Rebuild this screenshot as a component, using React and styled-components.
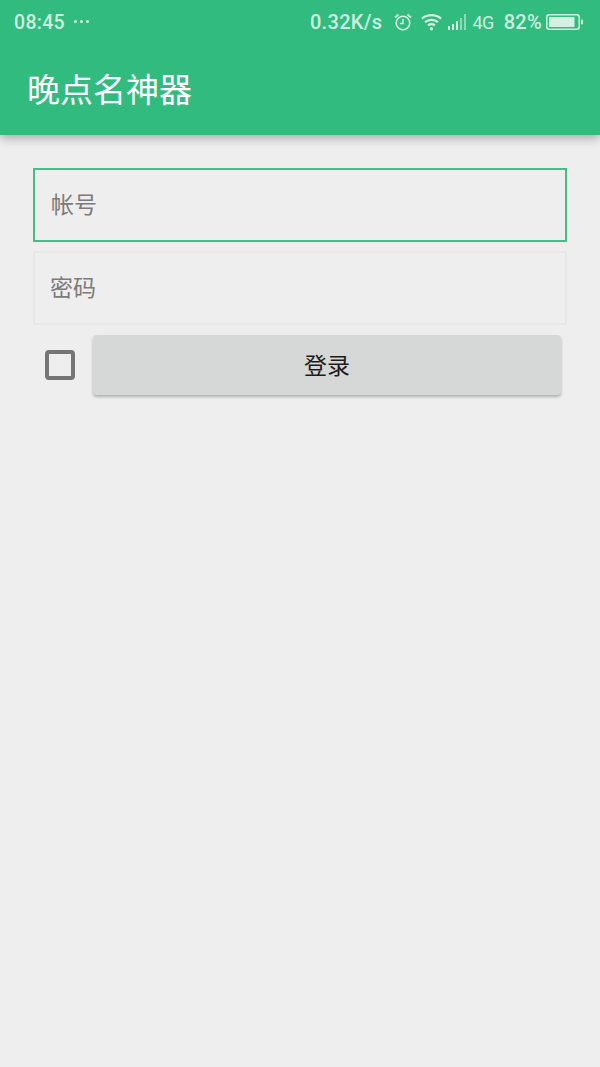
import styled, { createGlobalStyle } from "styled-components";

const GlobalStyle = createGlobalStyle`
  html, body {
    margin: 0;
    padding: 0;
    background: #eeeeee;
  }
  * {
    box-sizing: border-box;
  }
`;

const Page = styled.div`
  width: 600px;
  height: 1067px;
  background: #eeeeee;
  overflow: hidden;
  font-family: "Noto Sans CJK SC", "Noto Sans", sans-serif;
`;

const Header = styled.header`
  height: 135px;
  background: #32bb7f;
  box-shadow: 0 3px 10px rgba(0, 0, 0, 0.3);
`;

const StatusBar = styled.div`
  height: 44px;
  padding: 0 17px 0 14px;
  display: flex;
  align-items: center;
  justify-content: space-between;
  color: #cdeedf;
  font-family: Roboto, sans-serif;
  font-weight: 500;
`;

const StatusGroup = styled.div`
  display: flex;
  align-items: center;
`;

const Time = styled.span`
  font-size: 19.5px;
  letter-spacing: 0.3px;
`;

const Dots = styled.span`
  display: flex;
  gap: 3px;
  margin-left: 9px;
  margin-bottom: 2px;

  i {
    width: 3px;
    height: 3px;
    border-radius: 50%;
    background: #d4f0e3;
  }
`;

const Speed = styled.span`
  font-size: 20px;
  letter-spacing: 0.3px;
  margin-right: 11px;
`;

const Network = styled.span`
  font-size: 18px;
  font-weight: 400;
  margin: 0 10px 0 5px;
  letter-spacing: -0.6px;
`;

const Percent = styled.span`
  font-size: 20px;
  letter-spacing: 0.3px;
  margin-right: 4px;
`;

const Title = styled.h1`
  margin: 0;
  padding: 0 0 0 27px;
  font-size: 33px;
  font-weight: 400;
  line-height: 88px;
  color: #ffffff;
`;

const Form = styled.main`
  padding: 33px 33px 0;
  display: flex;
  flex-direction: column;
  gap: 9px;
`;

const Field = styled.div`
  height: 74px;
  padding: 0 0 4px ${(p) => (p.$focused ? "16px" : "15px")};
  display: flex;
  align-items: center;
  font-size: 23px;
  color: #7b7b7b;
  border: 2px solid ${(p) => (p.$focused ? "#45bd88" : "#e8e8e8")};
`;

const LoginRow = styled.div`
  display: flex;
  align-items: center;
  padding: 1px 6px 0 12px;
`;

const CheckBox = styled.span`
  width: 30px;
  height: 30px;
  border: 4px solid #757575;
  border-radius: 4px;
  flex-shrink: 0;
  margin-right: 18px;
`;

const LoginButton = styled.button`
  flex: 1;
  height: 60px;
  border: none;
  border-radius: 4px;
  background: #d6d7d7;
  box-shadow: 0 2px 3px rgba(0, 0, 0, 0.26);
  font-family: inherit;
  font-size: 23px;
  color: #1c1c1c;
  padding: 0 0 3px;
`;

const StatusIcon = styled.svg`
  display: block;
  flex-shrink: 0;
  margin-right: ${(p) => p.$gap || 0}px;
`;

const AlarmIcon = () => (
  <StatusIcon width="20" height="20" viewBox="0 0 20 20" fill="none" stroke="#d4f0e3" strokeWidth="1.6" $gap={8}>
    <circle cx="10" cy="11" r="6.8" />
    <path d="M10 7v4.5H6.8" strokeWidth="1.4" />
    <path d="M2 5.5 5.5 2.5M18 5.5 14.5 2.5" strokeWidth="1.8" />
  </StatusIcon>
);

const WifiIcon = () => (
  <StatusIcon width="21" height="18" viewBox="0 0 22 18" fill="none" stroke="#d4f0e3" strokeWidth="2.4" $gap={6}>
    <path d="M1 5.5C6.7.7 15.3.7 21 5.5" />
    <path d="M4.2 9.2c4-3.3 9.6-3.3 13.6 0" />
    <path d="M7.4 12.6c2.1-1.7 5.1-1.7 7.2 0" />
    <circle cx="11" cy="16" r="1.8" fill="#d4f0e3" stroke="none" />
  </StatusIcon>
);

const SignalIcon = () => (
  <StatusIcon width="19" height="18" viewBox="0 0 19 18">
    <rect x="0" y="13" width="2" height="4" fill="#d4f0e3" />
    <rect x="4" y="11" width="2" height="6" fill="#d4f0e3" />
    <rect x="8" y="8" width="2" height="9" fill="#d4f0e3" />
    <rect x="12" y="5" width="2" height="12" fill="#8fd8b8" />
    <rect x="16" y="1" width="2" height="16" fill="#8fd8b8" />
  </StatusIcon>
);

const BatteryIcon = () => (
  <StatusIcon width="37" height="16" viewBox="0 0 37 16" fill="none">
    <rect x="0.75" y="0.75" width="32.5" height="14.5" rx="2.5" stroke="#d4f0e3" strokeWidth="1.5" />
    <rect x="3" y="3" width="25.5" height="10" fill="#d4f0e3" />
    <rect x="35" y="5.5" width="2" height="5" rx="1" fill="#d4f0e3" />
  </StatusIcon>
);

export default function App() {
  return (
    <Page>
      <GlobalStyle />
      <Header>
        <StatusBar>
          <StatusGroup>
            <Time>08:45</Time>
            <Dots>
              <i />
              <i />
              <i />
            </Dots>
          </StatusGroup>
          <StatusGroup>
            <Speed>0.32K/s</Speed>
            <AlarmIcon />
            <WifiIcon />
            <SignalIcon />
            <Network>4G</Network>
            <Percent>82%</Percent>
            <BatteryIcon />
          </StatusGroup>
        </StatusBar>
        <Title>晚点名神器</Title>
      </Header>
      <Form>
        <Field $focused>帐号</Field>
        <Field>密码</Field>
        <LoginRow>
          <CheckBox />
          <LoginButton>登录</LoginButton>
        </LoginRow>
      </Form>
    </Page>
  );
}
